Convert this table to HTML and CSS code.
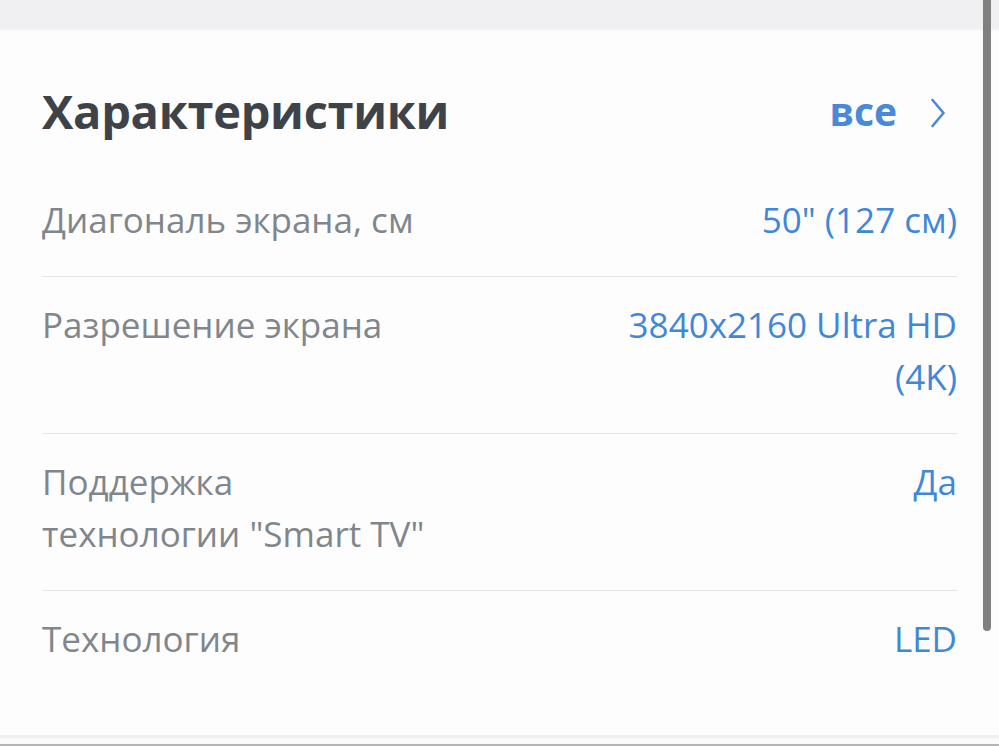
FILE: index.html
```html
<!DOCTYPE html>
<html lang="ru">
<head>
<meta charset="utf-8">
<title>Характеристики</title>
<link rel="stylesheet" href="styles.css">
</head>
<body>
<div class="topbar"></div>
<main class="card">
  <header class="header">
    <h1 class="title">Характеристики</h1>
    <a class="all" href="#">все
      <svg class="chevron" width="14" height="30" viewBox="0 0 14 30"><path d="M1.5 2 L12.5 15 L1.5 28" fill="none" stroke="#4a88d8" stroke-width="2.6" stroke-linecap="round" stroke-linejoin="round"/></svg>
    </a>
  </header>
  <div class="specs">
    <div class="row">
      <div class="label">Диагональ экрана, см</div>
      <div class="value">50" (127 см)</div>
    </div>
    <div class="row">
      <div class="label">Разрешение экрана</div>
      <div class="value">3840x2160 Ultra HD (4K)</div>
    </div>
    <div class="row">
      <div class="label">Поддержка технологии "Smart TV"</div>
      <div class="value">Да</div>
    </div>
    <div class="row last">
      <div class="label">Технология</div>
      <div class="value">LED</div>
    </div>
  </div>
</main>
<div class="bottom"></div>
<div class="scrollbar"></div>
</body>
</html>
```

FILE: styles.css
```css
html, body {
  margin: 0;
  padding: 0;
  background: #fdfdfd;
}
body {
  font-family: "Open Sans", "Liberation Sans", sans-serif;
  width: 999px;
  height: 746px;
  overflow: hidden;
  position: relative;
}
.topbar {
  height: 29px;
  background: #f0f0f2;
  border-bottom: 2px solid #f5f5f7;
}
.card {
  padding: 0 42px;
  height: 704px;
  box-sizing: border-box;
}
.header {
  display: flex;
  justify-content: space-between;
  align-items: center;
  padding: 50px 0 31px;
}
.title {
  margin: 0;
  font-size: 47px;
  line-height: 60px;
  font-weight: 700;
  color: #3e4349;
  letter-spacing: -0.3px;
}
.all {
  display: flex;
  align-items: center;
  gap: 34px;
  text-decoration: none;
  color: #4a88d8;
  font-size: 39px;
  font-weight: 700;
  line-height: 60px;
  margin-right: 12px;
}
.chevron {
  display: block;
  margin-top: 4px;
}
.row {
  display: grid;
  grid-template-columns: 1fr 1fr;
  column-gap: 135px;
  padding: 22px 0 30px;
  border-bottom: 1px solid #e6e6e6;
  font-size: 35px;
  line-height: 52px;
}
.row.last {
  border-bottom: none;
}
.label {
  color: #80868c;
}
.value {
  color: #3f87d9;
  text-align: right;
}
.bottom {
  height: 6px;
  border-top: 3px solid #efefef;
  border-bottom: 2px solid #b5b5b5;
  background: #fafafa;
}
.scrollbar {
  position: absolute;
  top: 0;
  left: 983px;
  width: 8px;
  height: 631px;
  background: #808080;
  border-radius: 0 0 4px 4px;
}
```
